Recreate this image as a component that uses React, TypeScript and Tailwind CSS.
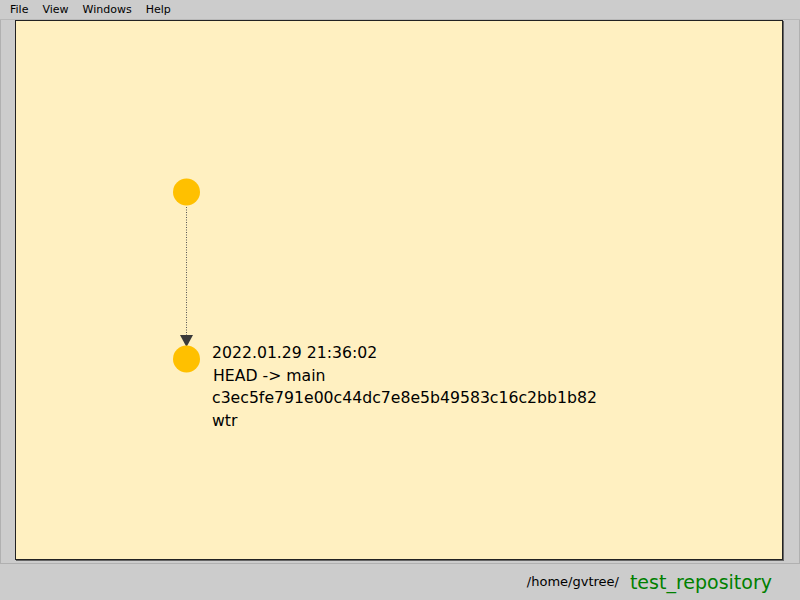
import React from "react";

const menuItems = ["File", "View", "Windows", "Help"];

const commitLines = [
  { text: "2022.01.29 21:36:02", indent: false },
  { text: "HEAD -> main", indent: true },
  { text: "c3ec5fe791e00c44dc7e8e5b49583c16c2bb1b82", indent: false },
  { text: "wtr", indent: false },
];

const CommitGraph = () => {
  return (
    <svg className="absolute left-0 top-0" width="768" height="540" viewBox="0 0 768 540">
      {/* edge between the two commits */}
      <line x1="170.5" y1="186" x2="170.5" y2="316" stroke="#555" strokeWidth="1" strokeDasharray="1 1.5" />
      <polygon points="164,314 177,314 170.5,326" fill="#3a3a3a" />
      <circle cx="170.5" cy="171" r="13.5" fill="#ffc000" />
      <circle cx="170.5" cy="338" r="13.5" fill="#ffc000" />
    </svg>
  );
};

export default function App() {
  return (
    <div className="w-[800px] h-[600px] flex flex-col bg-[#cccccc] font-['DejaVu_Sans',sans-serif] overflow-hidden">
      {/* menu bar */}
      <div className="h-[20px] flex items-center gap-[14px] pl-[10px] pt-[2px] text-[11px] text-black border-b border-[#b8b8b8]">
        {menuItems.map((m) => (
          <span key={m}>{m}</span>
        ))}
      </div>

      {/* graph area */}
      <div className="h-[544px] flex border-l border-r border-b border-[#b0b0b0] pl-[14px] pr-[16px] pb-[3px]">
        <div className="relative flex-1 bg-[#fff0c1] border border-[#222] shadow-[1px_1px_0_#666]">
          <CommitGraph />
          <div className="absolute left-[196px] top-[321px] text-[15.7px] leading-[22.5px] text-black whitespace-pre">
            {commitLines.map((l) => (
              <div key={l.text} className={l.indent ? "pl-[1px]" : ""}>
                {l.text}
              </div>
            ))}
          </div>
        </div>
      </div>

      {/* status bar */}
      <div className="flex-1 flex items-center justify-end gap-[11px] pr-[28px]">
        <span className="text-[13px] text-black">/home/gvtree/</span>
        <span className="text-[19px] text-[#008000]">test_repository</span>
      </div>
    </div>
  );
}
